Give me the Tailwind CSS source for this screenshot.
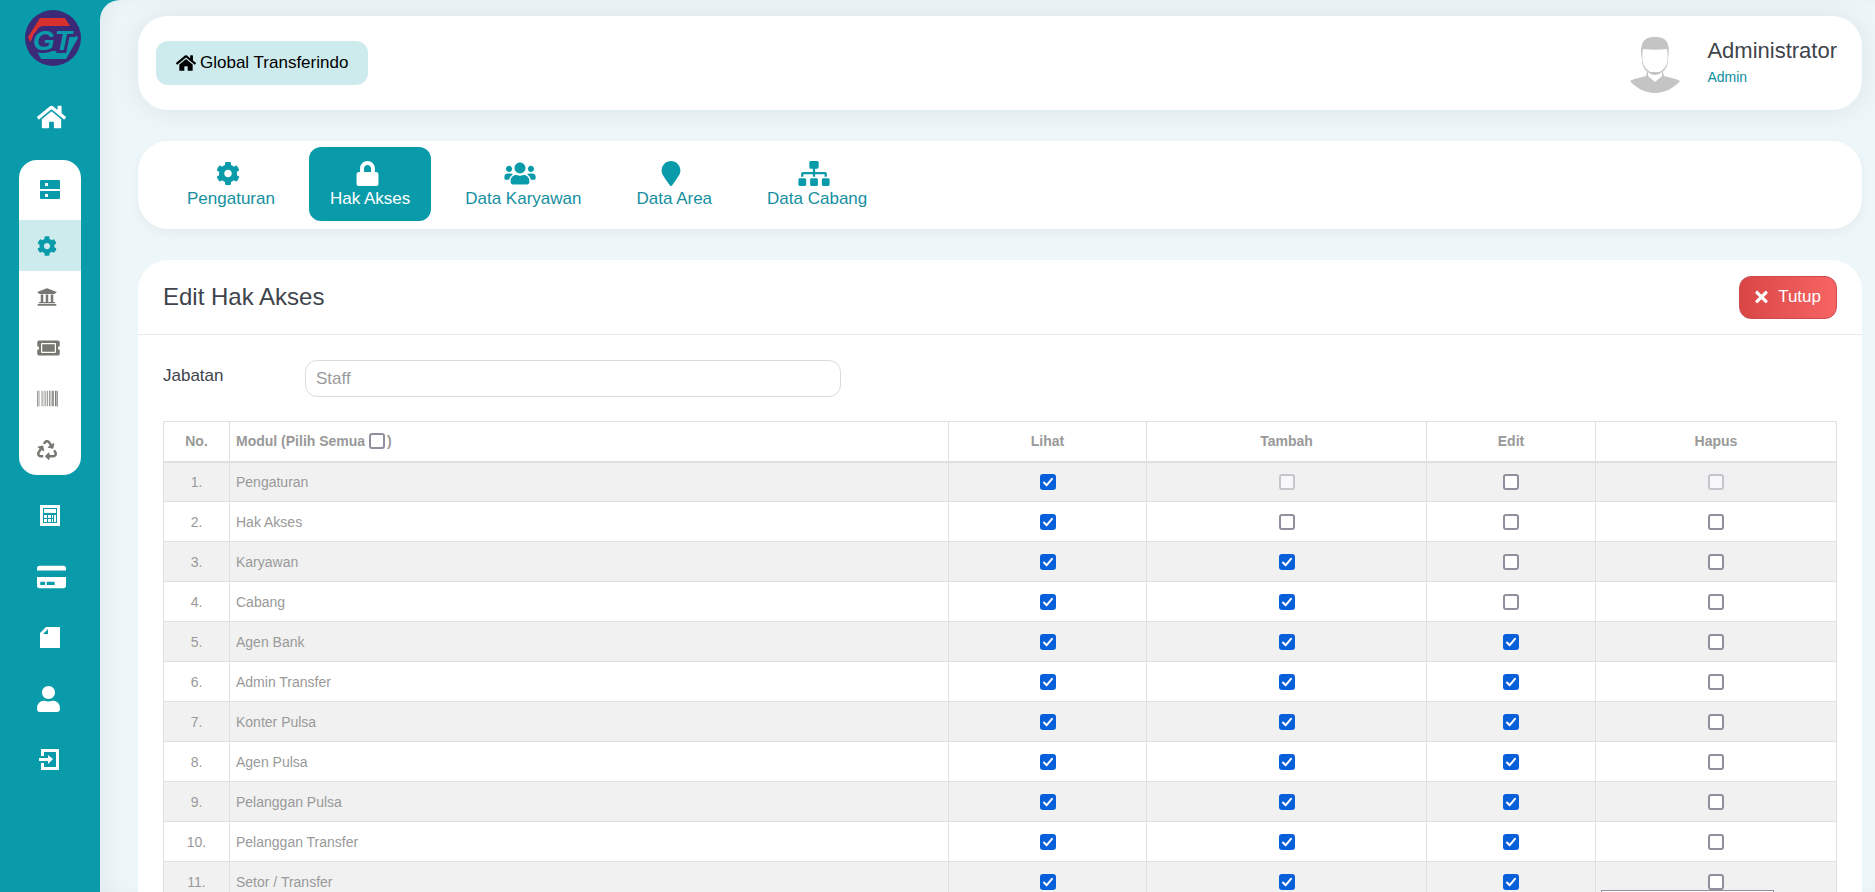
<!DOCTYPE html>
<html lang="id">
<head>
    <meta charset="UTF-8">
    <meta name="viewport" content="width=device-width, initial-scale=1.0">
    <title>Edit Hak Akses - Global Transferindo</title>
    <script src="https://cdn.jsdelivr.net/npm/@tailwindcss/browser@4"></script>
    <style>
        /* Checkbox kustom */
        .cek {
            appearance: none;
            width: 16px;
            height: 16px;
            border: 2px solid #8f8f9d;
            border-radius: 3px;
            background-color: #fff;
            vertical-align: middle;
        }
        .cek:checked {
            border-color: #0560d9;
            background: #0560d9 url("data:image/svg+xml,%3Csvg xmlns='http://www.w3.org/2000/svg' viewBox='0 0 12 12'%3E%3Cpath d='M2 6.5l2.7 2.7L10 2.8' fill='none' stroke='%23fff' stroke-width='2' stroke-linecap='round' stroke-linejoin='round'/%3E%3C/svg%3E") center / 12px 12px no-repeat;
        }
        .cek:disabled {
            border-color: #c5c5cc;
            background-color: #f8f8fa;
        }
    </style>
</head>
<body class="flex h-screen overflow-hidden bg-[#0a9bab] font-['Liberation_Sans',Arial,sans-serif] text-[17px] text-[#40444c]">

    <!-- Ikon yang dipakai lebih dari sekali -->
    <svg class="hidden">
        <symbol id="ikon-home" viewBox="0 0 576 512"><path d="M280.37 148.26L96 300.11V464a16 16 0 0 0 16 16l112.06-.29a16 16 0 0 0 15.92-16V368a16 16 0 0 1 16-16h64a16 16 0 0 1 16 16v95.64a16 16 0 0 0 16 16.05L464 480a16 16 0 0 0 16-16V300L295.67 148.26a12.19 12.19 0 0 0-15.3 0zM571.6 251.47L488 182.56V44.05a12 12 0 0 0-12-12h-56a12 12 0 0 0-12 12v72.61L318.47 43a48 48 0 0 0-61 0L4.34 251.47a12 12 0 0 0-1.6 16.9l25.5 31A12 12 0 0 0 45.15 301l235.22-193.74a12.19 12.19 0 0 1 15.3 0L530.9 301a12 12 0 0 0 16.9-1.6l25.5-31a12 12 0 0 0-1.7-16.93z"/></symbol>
        <symbol id="ikon-gear" viewBox="0 0 512 512"><path d="M487.4 315.7l-42.6-24.6c4.3-23.2 4.3-47 0-70.2l42.6-24.6c4.9-2.8 7.1-8.6 5.5-14-11.1-35.6-30-67.8-54.7-94.6-3.8-4.1-10-5.1-14.8-2.3L380.8 110c-17.9-15.4-38.5-27.3-60.8-35.1V25.8c0-5.6-3.9-10.5-9.4-11.7-36.7-8.2-74.3-7.8-109.2 0-5.5 1.2-9.4 6.1-9.4 11.7V75c-22.2 7.9-42.8 19.8-60.8 35.1L88.7 85.5c-4.9-2.8-11-1.9-14.8 2.3-24.7 26.7-43.6 58.9-54.7 94.6-1.7 5.4.6 11.2 5.5 14L67.3 221c-4.3 23.2-4.3 47 0 70.2l-42.6 24.6c-4.9 2.8-7.1 8.6-5.5 14 11.1 35.6 30 67.8 54.7 94.6 3.8 4.1 10 5.1 14.8 2.3l42.6-24.6c17.9 15.4 38.5 27.3 60.8 35.1v49.2c0 5.6 3.9 10.5 9.4 11.7 36.7 8.2 74.3 7.8 109.2 0 5.5-1.2 9.4-6.1 9.4-11.7v-49.2c22.2-7.9 42.8-19.8 60.8-35.1l42.6 24.6c4.9 2.8 11 1.9 14.8-2.3 24.7-26.7 43.6-58.9 54.7-94.6 1.5-5.5-.7-11.3-5.6-14.1zM256 336c-44.1 0-80-35.9-80-80s35.9-80 80-80 80 35.9 80 80-35.9 80-80 80z"/></symbol>
    </svg>

    <!-- Sidebar -->
    <aside class="w-[100px] shrink-0 pt-[10px] text-white">
        <a href="#" aria-label="Beranda" class="ml-[25px] block h-14 w-14">
            <svg viewBox="0 0 56 56" class="h-14 w-14">
                <circle cx="28" cy="28" r="28" fill="#3b2a78"/>
                <path d="M44 20h4l5 8-12 21H16l-4-8h26z" fill="#0a9bab"/>
                <path d="M15 8h25l5 8H19c-5 0-7 3-8 7L5 32l-2-5z" fill="#d8302f"/>
                <text x="8" y="40" font-size="28" font-weight="bold" font-style="italic" fill="#0a9bab" stroke="#3b2a78" stroke-width="6" paint-order="stroke">GT</text>
            </svg>
        </a>
        <nav class="mt-5">
            <a href="#" aria-label="Home" class="flex h-[61px] items-center pl-[37px]">
                <svg class="h-[26px] w-[29px]" fill="currentColor"><use href="#ikon-home"/></svg>
            </a>
            <div class="mx-[19px] mt-[13px] mb-[10px] overflow-hidden rounded-[18px] bg-white text-[#777871]">
                <a href="#" aria-label="Master" class="flex h-[60px] items-center pl-[21px] text-[#0a9bab]">
                    <svg viewBox="0 0 20 20" class="h-5 w-5" fill="currentColor"><path fill-rule="evenodd" d="M1 0h18a1 1 0 0 1 1 1v8H0V1a1 1 0 0 1 1-1zM5 3v3h3V3zM0 11h20v7a1 1 0 0 1-1 1H1a1 1 0 0 1-1-1zm5 3v3h3v-3z"/></svg>
                </a>
                <a href="#" aria-label="Pengaturan" class="flex h-[51px] items-center bg-[#cdebed] pl-[18px] text-[#0a9bab]">
                    <svg class="h-5 w-5" fill="currentColor"><use href="#ikon-gear"/></svg>
                </a>
                <a href="#" aria-label="Bank" class="flex h-[51px] items-center pl-[18px]">
                    <svg viewBox="0 0 512 512" class="h-5 w-5" fill="currentColor"><path d="M496 128v16a8 8 0 0 1-8 8h-24v12c0 6.627-5.373 12-12 12H60c-6.627 0-12-5.373-12-12v-12H24a8 8 0 0 1-8-8v-16a8 8 0 0 1 4.941-7.392l232-88a7.996 7.996 0 0 1 6.118 0l232 88A8 8 0 0 1 496 128zm-24 304H40c-13.255 0-24 10.745-24 24v16a8 8 0 0 0 8 8h464a8 8 0 0 0 8-8v-16c0-13.255-10.745-24-24-24zM96 192v192H60c-6.627 0-12 5.373-12 12v20h416v-20c0-6.627-5.373-12-12-12h-36V192h-64v192h-64V192h-64v192h-64V192H96z"/></svg>
                </a>
                <a href="#" aria-label="Tiket" class="flex h-[51px] items-center pl-[18px]">
                    <svg viewBox="0 0 576 512" class="h-5 w-[23px]" fill="currentColor"><path d="M128 160h320v192H128V160zm400 96c0 26.51 21.49 48 48 48v96c0 26.51-21.49 48-48 48H48c-26.51 0-48-21.49-48-48v-96c26.51 0 48-21.49 48-48s-21.49-48-48-48v-96c0-26.51 21.49-48 48-48h480c26.51 0 48 21.49 48 48v96c-26.51 0-48 21.49-48 48zm-48-104c0-13.255-10.745-24-24-24H120c-13.255 0-24 10.745-24 24v208c0 13.255 10.745 24 24 24h336c13.255 0 24-10.745 24-24V152z"/></svg>
                </a>
                <a href="#" aria-label="Barcode" class="flex h-[51px] items-center pl-[18px]">
                    <svg viewBox="0 0 512 512" class="h-[21px] w-[21px]" fill="currentColor"><path d="M0 448V64h18v384H0zm26.857-.273V64H36v383.727h-9.143zm27.143 0V64h8.857v383.727H54zm44.857 0V64h8.857v383.727h-8.857zm36 0V64h17.714v383.727h-17.714zm44.857 0V64h8.857v383.727h-8.857zm18 0V64h8.857v383.727h-8.857zm18 0V64h8.857v383.727h-8.857zm35.715 0V64h18v383.727h-18zm44.857 0V64h18v383.727h-18zm35.999 0V64h18.001v383.727h-18.001zm36.001 0V64h18.001v383.727h-18.001zm26.857 0V64h18v383.727h-18zm45.143 0V64h26.857v383.727h-26.857zm35.714 0V64h9.143v383.727H476zm18 .273V64h18v384h-18z"/></svg>
                </a>
                <a href="#" aria-label="Daur ulang" class="flex h-[51px] items-center pl-[18px]">
                    <svg viewBox="0 0 512 512" class="h-5 w-5" fill="currentColor"><path d="M184.561 261.903c3.232 13.997-12.123 24.635-24.068 17.168l-40.736-25.455-50.867 81.402C55.606 356.273 70.96 384 96.012 384H148c6.627 0 12 5.373 12 12v40c0 6.627-5.373 12-12 12H96.115c-75.334 0-121.302-83.048-81.408-146.88l50.822-81.388-40.725-25.448c-12.081-7.547-8.966-25.961 4.879-29.158l110.237-25.45c8.611-1.988 17.201 3.381 19.189 11.99l25.452 110.237zm98.561-182.915l41.289 66.076-40.74 25.457c-12.051 7.528-9 25.953 4.879 29.158l110.237 25.45c8.672 1.999 17.215-3.438 19.189-11.99l25.45-110.237c3.197-13.844-11.99-24.719-24.068-17.168l-40.687 25.424-41.263-66.082c-37.521-60.033-125.209-60.171-162.816 0l-17.963 28.766c-3.51 5.62-1.8 13.021 3.82 16.533l33.919 21.195c5.62 3.512 13.024 1.803 16.536-3.817l17.961-28.743c12.712-20.341 41.973-19.676 54.257-.022zM497.288 301.12l-27.515-44.065c-3.511-5.623-10.916-7.334-16.538-3.821l-33.861 21.159c-5.62 3.512-7.33 10.915-3.818 16.536l27.564 44.112c13.257 21.211-2.057 48.96-27.136 48.96H320V336.02c0-14.213-17.242-21.383-27.313-11.313l-80 79.981c-6.249 6.248-6.249 16.379 0 22.627l80 79.989C302.689 517.308 320 510.3 320 495.989V448h95.88c75.274 0 121.335-82.997 81.408-146.88z"/></svg>
                </a>
            </div>
            <a href="#" aria-label="Kalkulator" class="flex h-[61px] items-center pl-10">
                <svg viewBox="0 0 20 21" class="h-[21px] w-5" fill="currentColor"><path fill-rule="evenodd" d="M0 0h20v21H0zM3 3v15h14V3z"/><path d="M4 4h12v4H4zM4 10h3v3H4zM8 10h3v3H8zM12 10h1v3h-1zM14 10h2v7h-2zM4 14h3v3H4zM8 14h3v3H8zM12 14h1v3h-1z"/></svg>
            </a>
            <a href="#" aria-label="Kartu" class="flex h-[61px] items-center pl-[37px]">
                <svg viewBox="0 0 576 512" class="h-[26px] w-[29px]" fill="currentColor"><path d="M0 432c0 26.5 21.5 48 48 48h480c26.5 0 48-21.5 48-48V256H0v176zm192-68c0-6.6 5.4-12 12-12h136c6.6 0 12 5.4 12 12v40c0 6.6-5.4 12-12 12H204c-6.6 0-12-5.4-12-12v-40zm-128 0c0-6.6 5.4-12 12-12h72c6.6 0 12 5.4 12 12v40c0 6.6-5.4 12-12 12H76c-6.6 0-12-5.4-12-12v-40zM576 80v48H0V80c0-26.5 21.5-48 48-48h480c26.5 0 48 21.5 48 48z"/></svg>
            </a>
            <a href="#" aria-label="Laporan" class="flex h-[61px] items-center pl-10">
                <svg viewBox="0 0 20 21" class="h-[21px] w-5" fill="currentColor"><path fill-rule="evenodd" d="M6 0h14v21H0V6zM8 2L3 7h5z"/></svg>
            </a>
            <a href="#" aria-label="Profil" class="flex h-[61px] items-center pl-[37px]">
                <svg viewBox="0 0 448 512" class="h-[26px] w-[23px]" fill="currentColor"><path d="M224 256c70.7 0 128-57.3 128-128S294.7 0 224 0 96 57.3 96 128s57.3 128 128 128zm89.6 32h-16.7c-22.2 10.2-46.9 16-72.9 16s-50.6-5.8-72.9-16h-16.7C60.2 288 0 348.2 0 422.4V464c0 26.5 21.5 48 48 48h352c26.5 0 48-21.5 48-48v-41.6c0-74.2-60.2-134.4-134.4-134.4z"/></svg>
            </a>
            <a href="#" aria-label="Keluar" class="flex h-[61px] items-center pl-[39px]">
                <svg viewBox="0 0 20 21" class="h-[21px] w-5" fill="currentColor"><path d="M2 0h18v21H2v-7h3v4h12V3H5v4H2z"/><path d="M0 9h9V6l5 4-5 5v-3H0z"/></svg>
            </a>
        </nav>
    </aside>

    <!-- Konten -->
    <main class="min-w-0 flex-1 overflow-y-auto rounded-tl-[20px] bg-[#edf6f8] pt-4 pr-[13px] pl-[38px] shadow-[inset_12px_0_24px_-8px_rgba(0,0,0,0.06)] [scrollbar-width:none]">

        <header class="flex h-[94px] items-center justify-between rounded-[30px] bg-white pr-[25px] pl-[18px] shadow-[0_0_30px_rgba(30,40,60,0.08)]">
            <a href="#" class="flex h-11 items-center gap-1 rounded-xl bg-[#cdebed] px-5 text-black">
                <svg class="h-[18px] w-5" fill="currentColor"><use href="#ikon-home"/></svg>
                Global Transferindo
            </a>
            <div class="flex items-center gap-[26px] pt-1">
                <svg viewBox="0 0 52 58" class="h-[58px] w-[52px]">
                    <path d="M13 24C10 6 15 1 26 1s16 5 13 23c0 8-6 15-13 15s-13-7-13-15z" fill="#c4c4c4"/>
                    <path d="M14 13c8 1 16 1 24 0 1 6 1 10 0 14-2 6-7 10-12 10s-10-4-12-10c-1-4-1-8 0-14z" fill="#fff"/>
                    <path d="M18 36l-1 4C10 42 4 43 1 45c6 7 15 12 25 12s19-5 25-12c-3-2-9-3-16-5l-1-4z" fill="#c4c4c4"/>
                    <path d="M19 36c4 4 10 4 14 0v4l-7 6-7-6z" fill="#fff"/>
                </svg>
                <div class="pb-1">
                    <div class="text-[22px] leading-7">Administrator</div>
                    <div class="text-sm leading-6 text-[#0d8f9e]">Admin</div>
                </div>
            </div>
        </header>

        <nav class="mt-[31px] flex h-[88px] items-start gap-[13px] rounded-[30px] bg-white px-7 pt-[6px] text-[#158f9f] shadow-[0_4px_10px_rgba(30,60,60,0.05)]">
            <a href="#" class="flex flex-col items-center rounded-xl px-[21px] pt-[14px] pb-[10px] leading-[25px]">
                <svg class="mr-[6px] h-[25px] w-6 fill-[#0a9bab]"><use href="#ikon-gear"/></svg>
                Pengaturan
            </a>
            <a href="#" class="flex flex-col items-center rounded-xl bg-[#0a9bab] px-[21px] pt-[14px] pb-[10px] leading-[25px] text-white">
                <svg viewBox="0 0 448 512" class="mr-[6px] h-[25px] w-[23px]" fill="currentColor"><path d="M400 224h-24v-72C376 68.2 307.8 0 224 0S72 68.2 72 152v72H48c-26.5 0-48 21.5-48 48v192c0 26.5 21.5 48 48 48h352c26.5 0 48-21.5 48-48V272c0-26.5-21.5-48-48-48zm-104 0H152v-72c0-39.7 32.3-72 72-72s72 32.3 72 72v72z"/></svg>
                Hak Akses
            </a>
            <a href="#" class="flex flex-col items-center rounded-xl px-[21px] pt-[14px] pb-[10px] leading-[25px]">
                <svg viewBox="0 0 640 512" class="mr-[6px] h-[25px] w-8 fill-[#0a9bab]"><path d="M96 224c35.3 0 64-28.7 64-64s-28.7-64-64-64-64 28.7-64 64 28.7 64 64 64zm448 0c35.3 0 64-28.7 64-64s-28.7-64-64-64-64 28.7-64 64 28.7 64 64 64zm32 32h-64c-17.6 0-33.5 7.1-45.1 18.6 40.3 22.1 68.9 62 75.1 109.4h66c17.7 0 32-14.3 32-32v-32c0-35.3-28.7-64-64-64zm-256 0c61.9 0 112-50.1 112-112S381.9 32 320 32 208 82.1 208 144s50.1 112 112 112zm76.8 32h-8.3c-20.8 10-43.9 16-68.5 16s-47.6-6-68.5-16h-8.3C179.6 288 128 339.6 128 403.2V432c0 26.5 21.5 48 48 48h288c26.5 0 48-21.5 48-48v-28.8c0-63.6-51.6-115.2-115.2-115.2zm-223.7-13.4C161.5 263.1 145.6 256 128 256H64c-35.3 0-64 28.7-64 64v32c0 17.7 14.3 32 32 32h65.9c6.3-47.4 34.9-87.3 75.2-109.4z"/></svg>
                Data Karyawan
            </a>
            <a href="#" class="flex flex-col items-center rounded-xl px-[21px] pt-[14px] pb-[10px] leading-[25px]">
                <svg viewBox="0 0 384 512" class="mr-[6px] h-[25px] w-5 fill-[#0a9bab]"><path d="M172.268 501.67C26.97 291.031 0 269.413 0 192 0 85.961 85.961 0 192 0s192 85.961 192 192c0 77.413-26.97 99.031-172.268 309.67-9.535 13.774-29.93 13.773-39.464 0z"/></svg>
                Data Area
            </a>
            <a href="#" class="flex flex-col items-center rounded-xl px-[21px] pt-[14px] pb-[10px] leading-[25px]">
                <svg viewBox="0 0 640 512" class="mr-[6px] h-[25px] w-8 fill-[#0a9bab]"><path d="M128 352H32c-17.67 0-32 14.33-32 32v96c0 17.67 14.33 32 32 32h96c17.67 0 32-14.33 32-32v-96c0-17.67-14.33-32-32-32zm-24-80h192v48h48v-48h192v48h48v-57.59c0-21.17-17.23-38.41-38.41-38.41H344v-64h40c17.67 0 32-14.33 32-32V32c0-17.67-14.33-32-32-32H256c-17.67 0-32 14.33-32 32v96c0 17.67 14.33 32 32 32h40v64H94.41C73.23 224 56 241.23 56 262.41V320h48v-48zm264 80h-96c-17.67 0-32 14.33-32 32v96c0 17.67 14.33 32 32 32h96c17.67 0 32-14.33 32-32v-96c0-17.67-14.33-32-32-32zm240 0h-96c-17.67 0-32 14.33-32 32v96c0 17.67 14.33 32 32 32h96c17.67 0 32-14.33 32-32v-96c0-17.67-14.33-32-32-32z"/></svg>
                Data Cabang
            </a>
        </nav>

        <section class="mt-[31px] rounded-[30px] bg-white">
            <div class="flex h-[75px] items-center justify-between border-b border-[#e8e9eb] px-[25px]">
                <h1 class="text-2xl">Edit Hak Akses</h1>
                <button type="button" class="flex h-[43px] items-center gap-[10px] rounded-xl border border-[#cf4a4e] bg-linear-to-r from-[#d94646] to-[#f66464] px-[15px] text-white">
                    <svg viewBox="0 0 352 512" class="h-[18px] w-[13px]" fill="currentColor"><path d="M242.72 256l100.07-100.07c12.28-12.28 12.28-32.19 0-44.48l-22.24-22.24c-12.28-12.28-32.19-12.28-44.48 0L176 189.28 75.93 89.21c-12.28-12.28-32.19-12.28-44.48 0L9.21 111.45c-12.28 12.28-12.28 32.19 0 44.48L109.28 256 9.21 356.07c-12.28 12.28-12.28 32.19 0 44.48l22.24 22.24c12.28 12.28 32.2 12.28 44.48 0L176 322.72l100.07 100.07c12.28 12.28 32.2 12.28 44.48 0l22.24-22.24c12.28-12.28 12.28-32.19 0-44.48L242.72 256z"/></svg>
                    Tutup
                </button>
            </div>

            <div class="px-[25px] pt-[25px] pb-6">
                <div class="flex items-start">
                    <label for="jabatan" class="w-[142px] shrink-0 pt-[3px]">Jabatan</label>
                    <input id="jabatan" type="text" value="Staff" class="h-[37px] w-[32%] rounded-xl border border-[#dadbdd] px-[10px] text-[#9a9a9a]">
                </div>

                <table class="mt-6 w-full table-fixed border-collapse text-sm text-[#999]">
                    <thead>
                        <tr class="h-10 border border-b-2 border-[#dee0e3]">
                            <th class="w-[66px] border-r border-[#dee0e3]">No.</th>
                            <th class="border-r border-[#dee0e3] px-[6px] text-left">
                                <label>Modul (Pilih Semua <input type="checkbox" id="pilih-semua" class="cek mr-[2px] mb-[2px]">)</label>
                            </th>
                            <th class="w-[198px] border-r border-[#dee0e3]">Lihat</th>
                            <th class="w-[280px] border-r border-[#dee0e3]">Tambah</th>
                            <th class="w-[169px] border-r border-[#dee0e3]">Edit</th>
                            <th class="w-[241px]">Hapus</th>
                        </tr>
                    </thead>
                    <tbody id="daftar-modul"></tbody>
                </table>
            </div>
        </section>
    </main>

    <!-- Tooltip di tepi bawah layar -->
    <div class="fixed right-[101px] bottom-0 h-[2px] w-[173px] border border-b-0 border-[#8f8f9d] bg-white"></div>

    <script>
        const AKSES = ['Lihat', 'Tambah', 'Edit', 'Hapus'];

        // 1 = dicentang, 0 = kosong, x = tidak tersedia
        const MODUL = [
            ['Pengaturan', '1x0x'],
            ['Hak Akses', '1000'],
            ['Karyawan', '1100'],
            ['Cabang', '1100'],
            ['Agen Bank', '1110'],
            ['Admin Transfer', '1110'],
            ['Konter Pulsa', '1110'],
            ['Agen Pulsa', '1110'],
            ['Pelanggan Pulsa', '1110'],
            ['Pelanggan Transfer', '1110'],
            ['Setor / Transfer', '1110']
        ];

        // --- Isi tabel ---
        document.getElementById('daftar-modul').innerHTML = MODUL.map(([nama, izin], i) => `
            <tr class="h-10 border border-[#dee0e3] odd:bg-[#f1f1f1]">
                <td class="border-r border-[#dee0e3] text-center">${i + 1}.</td>
                <td class="border-r border-[#dee0e3] px-[6px]">${nama}</td>
                ${[...izin].map((v, k) => `
                <td class="border-r border-[#dee0e3] text-center">
                    <input type="checkbox" class="cek mb-[2px]" aria-label="${AKSES[k]} ${nama}" ${v === '1' ? 'checked' : ''} ${v === 'x' ? 'disabled' : ''}>
                </td>`).join('')}
            </tr>`).join('');

        // --- Pilih semua ---
        document.getElementById('pilih-semua').addEventListener('change', function() {
            document.querySelectorAll('#daftar-modul .cek:not(:disabled)').forEach(c => c.checked = this.checked);
        });
    </script>

</body>
</html>
